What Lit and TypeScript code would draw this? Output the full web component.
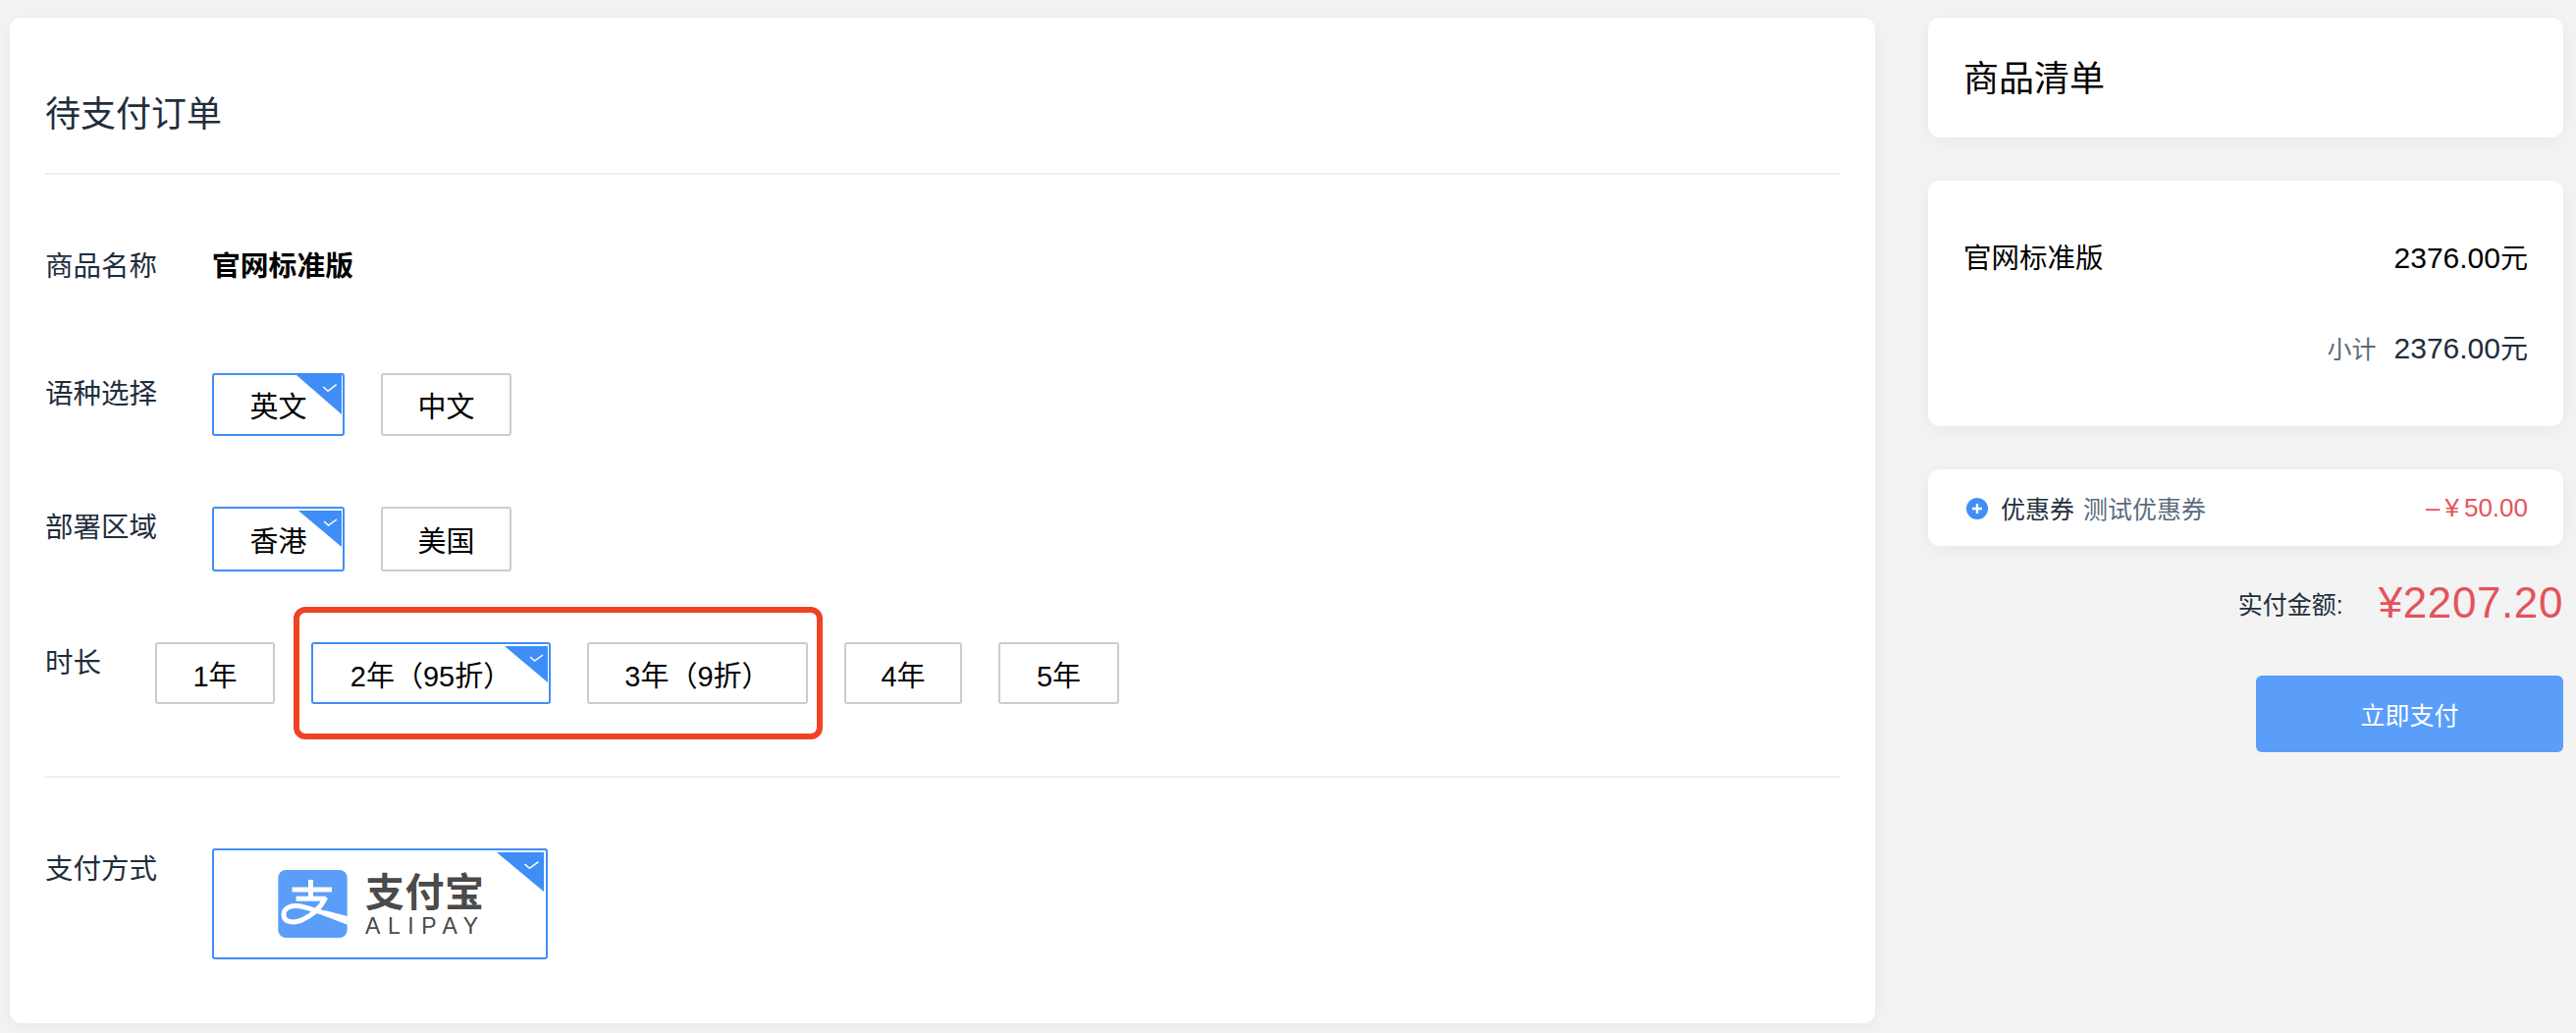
import { LitElement, html, css, svg } from "lit";
import { customElement } from "lit/decorators.js";

const corner = (variant: string) => html`<svg class="corner ${variant}" viewBox="0 0 46 40" preserveAspectRatio="none" aria-hidden="true">
  <polygon points="0,0 46,0 46,40" fill="#3f8ef7"></polygon>
  <polyline points="27.3,12 32,16.3 40.7,9.7" fill="none" stroke="#fff" stroke-width="1.5"></polyline>
</svg>`;

const alipayMark = svg`<svg class="mark" viewBox="250 108 212 208" aria-hidden="true">
  <rect x="250" y="108" width="212" height="208" rx="24" fill="#5a9efa"></rect>
  <g fill="none" stroke="#fff" stroke-width="15" stroke-linecap="butt">
    <path d="M350 138V196"></path>
    <path d="M293 168H415"></path>
    <path d="M305 196H397"></path>
    <path d="M396 192C380 225 350 250 320 263C295 272 267 268 267 245C267 222 295 212 330 222C375 234 420 250 462 262"></path>
  </g>
  <path d="M395 232L462 250V276L385 246Z" fill="#fff"></path>
</svg>`;

@customElement("app-root")
export class AppRoot extends LitElement {
  static styles = css`
    :host {
      display: block;
      width: 2624px;
      height: 1052px;
      overflow: hidden;
      background: #f3f3f3;
      font-family: "Liberation Sans", "Noto Sans CJK SC", sans-serif;
      color: #000;
    }
    .page {
      display: flex;
      align-items: flex-start;
      gap: 54px;
      padding: 18px 13px 0 10px;
      box-sizing: border-box;
      height: 1052px;
    }
    .card {
      background: #fff;
      border-radius: 12px;
      box-shadow: 0 4px 20px rgba(0, 0, 0, 0.05);
      box-sizing: border-box;
    }
    .main {
      width: 1900px;
      height: 1024px;
      padding: 0 36px;
      flex: none;
    }
    .head {
      padding: 78px 0 38px;
      font-size: 36px;
      line-height: 42px;
      color: #1f2d3d;
      border-bottom: 2px solid #eeeeee;
    }
    .row {
      display: flex;
      align-items: flex-start;
      margin-top: 72px;
    }
    .label {
      flex: none;
      width: 170px;
      font-size: 28.5px;
      line-height: 42px;
      color: #1f2d3d;
    }
    .label.short { width: 112px; }
    .name {
      font-size: 28.8px;
      line-height: 42px;
      font-weight: 700;
    }
    .row.lang { margin-top: 88px; }
    .opts {
      display: flex;
      gap: 37px;
    }
    .opt {
      position: relative;
      display: flex;
      align-items: center;
      justify-content: center;
      box-sizing: border-box;
      height: 64px;
      font-size: 29px;
      white-space: nowrap;
      border: 2px solid #cccccc;
      border-radius: 3px;
      background: #fff;
    }
    .opt.on { border-color: #3f8ef7; }
    .h66 .opt { height: 66px; }
    .h63 .opt { height: 63px; }
    .w135 { width: 135px; }
    .w133 { width: 133px; }
    .w122 { width: 122px; }
    .w244 { width: 244px; }
    .w225 { width: 225px; }
    .w120 { width: 120px; }
    .w123 { width: 123px; }
    .corner {
      position: absolute;
      top: 0;
      right: 1px;
      width: 46px;
      height: 40px;
    }
    .corner.sm {
      top: 2px;
      width: 44px;
      height: 37px;
    }
    .corner.lg {
      top: 2px;
      right: 2px;
      width: 48px;
      height: 40px;
    }
    .timeRow { position: relative; }
    .annot {
      position: absolute;
      left: 253px;
      top: -36px;
      width: 539px;
      height: 135px;
      box-sizing: border-box;
      border: 6px solid #ef4423;
      border-radius: 12px;
      pointer-events: none;
    }
    .rule {
      margin-top: 73px;
      border-top: 2px solid #eeeeee;
    }
    .pay {
      position: relative;
      box-sizing: border-box;
      width: 342px;
      height: 113px;
      border: 2px solid #3f8ef7;
      border-radius: 3px;
      display: flex;
      align-items: center;
      padding-left: 65px;
      gap: 18px;
    }
    .mark {
      width: 71px;
      height: 69px;
      flex: none;
    }
    .brand {
      display: flex;
      flex-direction: column;
      color: #4a4a4a;
    }
    .brand b {
      font-size: 40px;
      line-height: 44px;
      font-weight: 700;
      letter-spacing: 0.5px;
    }
    .brand span {
      font-size: 23px;
      line-height: 24px;
      letter-spacing: 7.6px;
      color: #4a4a4a;
    }
    .side {
      flex: none;
      width: 647px;
      display: flex;
      flex-direction: column;
    }
    .sideTitle {
      height: 122px;
      display: flex;
      align-items: center;
      padding: 0 36px 4px;
      font-size: 36px;
    }
    .list {
      height: 250px;
      margin-top: 44px;
      padding: 59px 36px 0;
      font-size: 28.5px;
    }
    .line {
      display: flex;
      justify-content: space-between;
      align-items: baseline;
      line-height: 40px;
    }
    .line.sub {
      justify-content: flex-end;
      gap: 18px;
      margin-top: 51px;
      color: #1f2d3d;
    }
    .muted { color: #5a6b7b; font-size: 25px; }
    .num { font-size: 30px; }
    .yuan { font-size: 28px; }
    .coupon {
      height: 78px;
      margin-top: 44px;
      padding: 0 36px 0 39px;
      display: flex;
      align-items: center;
      font-size: 25px;
      color: #1f2d3d;
    }
    .plus {
      width: 22px;
      height: 22px;
      flex: none;
      margin: 2px 13px 0 0;
    }
    .couponName {
      margin-left: 9px;
      color: #5a6b7b;
    }
    .off {
      margin-left: auto;
      font-size: 26px;
      color: #e4535c;
    }
    .off i {
      font-style: normal;
      margin-right: 5px;
    }
    .total {
      display: flex;
      justify-content: flex-end;
      align-items: center;
      margin-top: 31px;
      height: 54px;
    }
    .totalLabel {
      font-size: 25px;
      color: #1f2d3d;
      margin-right: 36px;
    }
    .totalValue {
      font-size: 44px;
      line-height: 54px;
      color: #e4535c;
      letter-spacing: 0.6px;
    }
    .payBtn {
      align-self: flex-end;
      width: 313px;
      height: 78px;
      margin-top: 47px;
      border: 0;
      border-radius: 6px;
      background: #5a9efa;
      color: #fff;
      font: inherit;
      font-size: 25px;
    }
  `;

  render() {
    return html`<div class="page">
      <section class="card main">
        <div class="head">待支付订单</div>
        <div class="row">
          <div class="label">商品名称</div>
          <div class="name">官网标准版</div>
        </div>
        <div class="row lang">
          <div class="label">语种选择</div>
          <div class="opts">
            <div class="opt on w135">英文${corner("")}</div>
            <div class="opt w133">中文</div>
          </div>
        </div>
        <div class="row h66">
          <div class="label">部署区域</div>
          <div class="opts">
            <div class="opt on w135">香港${corner("sm")}</div>
            <div class="opt w133">美国</div>
          </div>
        </div>
        <div class="row h63 timeRow">
          <div class="label short">时长</div>
          <div class="opts">
            <div class="opt w122">1年</div>
            <div class="opt on w244">2年（95折）${corner("sm")}</div>
            <div class="opt w225">3年（9折）</div>
            <div class="opt w120">4年</div>
            <div class="opt w123">5年</div>
          </div>
          <div class="annot"></div>
        </div>
        <div class="rule"></div>
        <div class="row">
          <div class="label">支付方式</div>
          <div class="pay">
            ${alipayMark}
            <div class="brand"><b>支付宝</b><span>ALIPAY</span></div>
            ${corner("lg")}
          </div>
        </div>
      </section>
      <aside class="side">
        <div class="card sideTitle">商品清单</div>
        <div class="card list">
          <div class="line"><span>官网标准版</span><span class="num">2376.00<span class="yuan">元</span></span></div>
          <div class="line sub"><span class="muted">小计</span><span class="num">2376.00<span class="yuan">元</span></span></div>
        </div>
        <div class="card coupon">
          <svg class="plus" viewBox="0 0 22 22" aria-hidden="true">
            <circle cx="11" cy="11" r="11" fill="#3f8ef7"></circle>
            <path d="M6 11H16M11 6V16" stroke="#fff" stroke-width="2.4"></path>
          </svg>
          <span>优惠券</span><span class="couponName">测试优惠券</span>
          <span class="off"><i>–</i><i>¥</i>50.00</span>
        </div>
        <div class="total">
          <span class="totalLabel">实付金额:</span>
          <span class="totalValue">¥2207.20</span>
        </div>
        <button class="payBtn">立即支付</button>
      </aside>
    </div>`;
  }
}
